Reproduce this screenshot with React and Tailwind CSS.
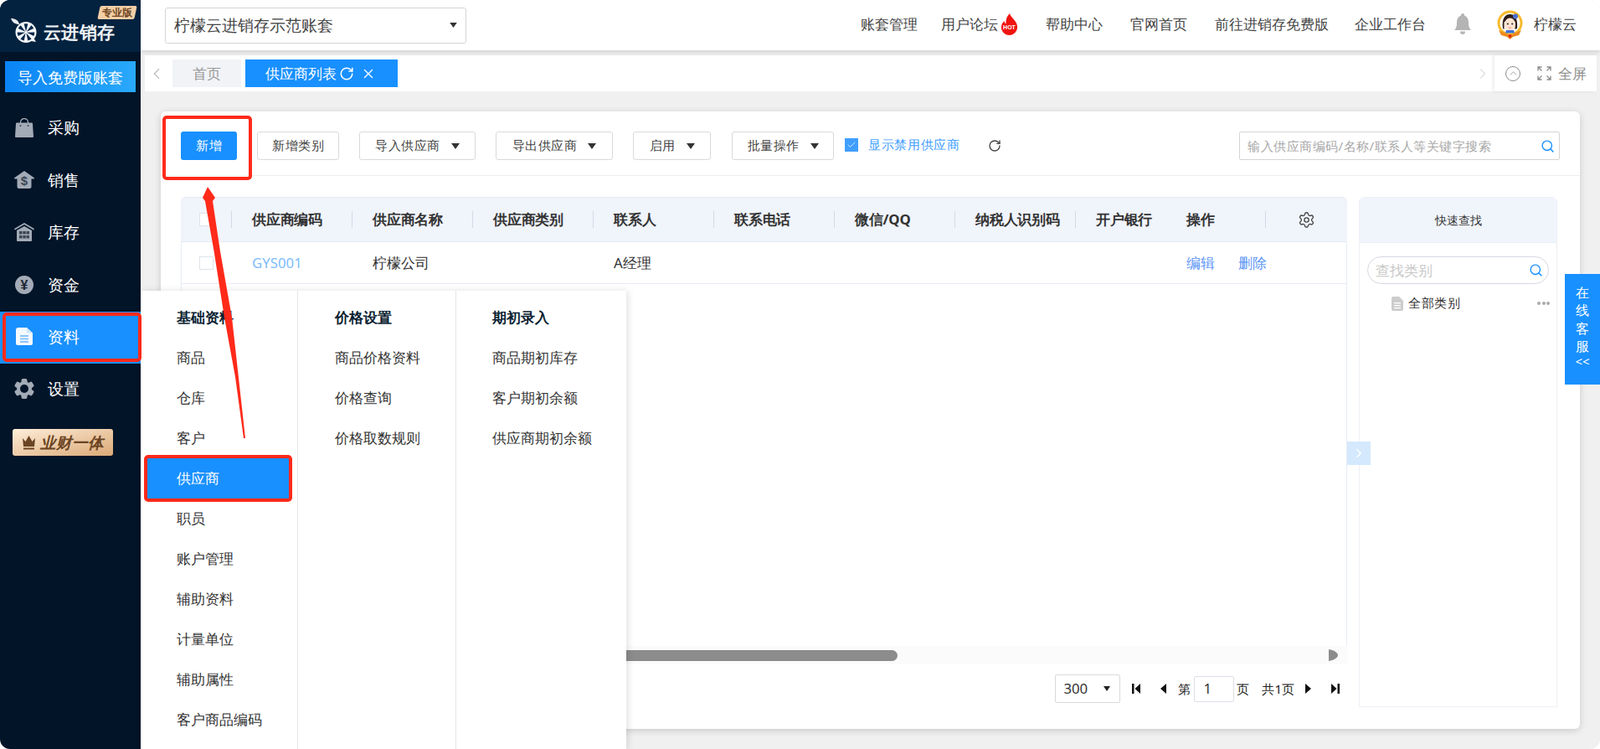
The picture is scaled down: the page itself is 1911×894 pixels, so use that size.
import React from 'react';
import { RotateCw, X, ChevronLeft, ChevronRight, ChevronUp, Search, Settings, Check } from 'lucide-react';

const Caret = ({ w = 10, h = 7 }) => (
  <svg width={w} height={h} viewBox="0 0 10 7" className="shrink-0"><path d="M0 0h10L5 7z" fill="#333" /></svg>
);

const wedge = 'M18 15.500l-2.400-9a9.500 9.500 0 0 1 4.800 0z';
const Logo = () => (
  <svg width="34" height="31" viewBox="0 0 34 31" className="shrink-0">
    <path d="M0 0c5 0 9 2 10 7-5 0-8-2-10-7z" fill="#e8edf2" />
    <circle cx="18" cy="16.500" r="12.500" fill="#f4f6f8" />
    <path d="M27 23l3 5-6-1z" fill="#f4f6f8" />
    <g fill="#06274a">
      {[0, 51, 103, 154, 206, 257, 309].map((a) => (
        <path key={a} d={wedge} transform={`rotate(${a} 18 16.500)`} />
      ))}
    </g>
  </svg>
);

const gray = '#a3abb6';
const dark = '#3c4654';
const icons = {
  bag: (
    <svg width="22" height="23" viewBox="0 0 22 23">
      <path d="M2 5.500h18a1 1 0 0 1 1 .9l1 15.600a1 1 0 0 1-1 1H1a1 1 0 0 1-1-1L1 6.400a1 1 0 0 1 1-.9z" fill={gray} />
      <path d="M6.500 9V5a4.500 4.500 0 0 1 9 0v4" fill="none" stroke={gray} strokeWidth="1.300" />
      <circle cx="6.500" cy="9" r="1" fill={dark} /><circle cx="15.500" cy="9" r="1" fill={dark} />
    </svg>
  ),
  money: (
    <svg width="24" height="21" viewBox="0 0 24 21">
      <path d="M12 0l11.500 8a.8.8 0 0 1-.5 1.500h-2.500V19a2 2 0 0 1-2 2H5.500a2 2 0 0 1-2-2V9.500H1A.8.8 0 0 1 .5 8z" fill={gray} />
      <text x="12" y="17" textAnchor="middle" fontSize="15" fontWeight="700" fill={dark} fontFamily="Liberation Sans">$</text>
    </svg>
  ),
  house: (
    <svg width="24" height="22" viewBox="0 0 24 22">
      <path d="M12 0l12 7-.8 1.400L12 2 .8 8.400 0 7z" fill={gray} />
      <path d="M3 9l9-5 9 5v12a1 1 0 0 1-1 1H4a1 1 0 0 1-1-1z" fill={gray} />
      <g fill={dark}>
        <rect x="6" y="10" width="3.500" height="3.500" /><rect x="10.300" y="10" width="3.500" height="3.500" /><rect x="14.500" y="10" width="3.500" height="3.500" />
        <rect x="6" y="15" width="3.500" height="3.500" /><rect x="10.300" y="15" width="3.500" height="3.500" /><rect x="14.500" y="15" width="3.500" height="3.500" />
      </g>
    </svg>
  ),
  yen: (
    <svg width="22" height="22" viewBox="0 0 22 22">
      <circle cx="11" cy="11" r="11" fill={gray} />
      <text x="11" y="17" textAnchor="middle" fontSize="16" fontWeight="700" fill="#1b2533" fontFamily="Liberation Sans">¥</text>
    </svg>
  ),
  doc: (
    <svg width="20" height="21" viewBox="0 0 20 21">
      <path d="M3 0h10l7 6.500V19a2 2 0 0 1-2 2H2a2 2 0 0 1-2-2V3a3 3 0 0 1 3-3z" fill="#f5faff" />
      <path d="M13 0l7 6.500h-7z" fill="#cfe6ff" />
      <g fill="#8cc4fb"><rect x="5" y="9" width="10" height="2" /><rect x="5" y="12.500" width="10" height="2" /><rect x="5" y="16" width="10" height="2" /></g>
    </svg>
  ),
  gear: (
    <svg width="24" height="24" viewBox="0 0 24 24">
      <circle cx="12" cy="12" r="9" fill={gray} />
      {[0, 60, 120, 180, 240, 300].map((a) => (
        <rect key={a} x="8.500" y="0" width="7" height="6" rx="2" fill={gray} transform={`rotate(${a} 12 12)`} />
      ))}
      <circle cx="12" cy="12" r="5" fill="#011428" />
    </svg>
  ),
};

const nav = [
  ['bag', '采购', 'pb-[6px]'],
  ['money', '销售', 'pb-[5px]'],
  ['house', '库存', 'pb-[5px]'],
  ['yen', '资金', 'pb-[3px]'],
  ['doc', '资料', 'pb-[3px] bg-[#1890ff]'],
  ['gear', '设置', 'pb-[2px]'],
];

function Sidebar() {
  return (
    <aside className="w-[168px] shrink-0 h-full bg-[#011428] flex flex-col">
      <div className="h-[62px] bg-[#03223f] relative flex items-start pl-[13px] pt-[22px]">
        <Logo />
        <span className="ml-[5px] mt-[3px] text-[21px] tracking-[0.3px] leading-[26px] font-bold text-[#f0f3f6] whitespace-nowrap">云进销存</span>
        <span className="absolute left-[118px] top-[7px] w-[44px] h-[16px] bg-[#f3cfa6] -skew-x-12 rounded-[2px] flex items-center justify-center">
          <span className="text-[12px] leading-none font-bold text-[#6e4520] skew-x-12 whitespace-nowrap">专业版</span>
        </span>
      </div>
      <button className="mt-[11px] mx-[6px] w-[156px] h-[37px] bg-gradient-to-r from-[#0a84f5] to-[#29a9fb] text-white text-[18px] leading-none flex items-center justify-center whitespace-nowrap">导入免费版账套</button>
      <nav className="mt-[14px] flex flex-col">
        {nav.map(([ic, label, cls]) => (
          <div key={label} className={`h-[62px] flex items-center ${cls}`}>
            <span className="w-[57px] shrink-0 flex items-center justify-center">{icons[ic]}</span>
            <span className="text-[19.200px] leading-none text-white">{label}</span>
          </div>
        ))}
      </nav>
      <div className="mt-[16px] ml-[15px] w-[120px] h-[32px] rounded-[3px] bg-gradient-to-br from-[#fdeeda] to-[#dba976] flex items-center pl-[12px] gap-[6px]">
        <svg width="15" height="17" viewBox="0 0 15 17" className="shrink-0"><path d="M0 3l3.500 4L7.500 0l4 7L15 3l-1 10H1z" fill="#6b4423" /><rect x="1" y="14.500" width="13" height="2" fill="#6b4423" /></svg>
        <span className="text-[18.500px] leading-none font-bold italic text-[#6b4423] whitespace-nowrap">业财一体</span>
      </div>
    </aside>
  );
}

function Avatar() {
  return (
    <svg width="33" height="35" viewBox="0 0 33 35" className="shrink-0">
      <circle cx="16.500" cy="15.500" r="13.500" fill="#fffdf6" stroke="#f7b92c" strokeWidth="3" />
      <path d="M8 22C6.500 11 10 5 16.500 5S26 11 25 22l-2.500 1V14c-3 0-7-1-9-3.500-1 2-2.500 3-4 4V23z" fill="#2e1d1a" />
      <ellipse cx="16.500" cy="17" rx="6.500" ry="7.500" fill="#fde3d3" />
      <circle cx="13.800" cy="16.500" r="1.100" fill="#332" /><circle cx="19.200" cy="16.500" r="1.100" fill="#332" />
      <path d="M15.200 21q1.300 .8 2.600 0" stroke="#d33" strokeWidth=".7" fill="none" />
      <circle cx="23" cy="7.500" r="3" fill="#4a6fd0" />
      <path d="M12 24h9l1 3.500H11z" fill="#3f70d6" />
      <path d="M3 24l13.500 6L30 24l-3 6-7 2-3.500 3-3.500-3-7-2z" fill="#ee8a1e" />
      <circle cx="16.500" cy="31" r="2" fill="#e02a14" />
    </svg>
  );
}

function TopBar() {
  return (
    <header className="h-[60px] shrink-0 bg-white shadow-[0_2px_6px_rgba(0,0,0,0.14)] relative z-10 flex items-center pl-[29px]">
      <div className="w-[360px] h-[43px] border border-[#d5d5d5] rounded-[3px] flex items-center justify-between pl-[10px] pr-[10px]">
        <span className="text-[19.200px] text-[#444] whitespace-nowrap">柠檬云进销存示范账套</span>
        <Caret w={9} h={6} />
      </div>
      <div className="ml-auto flex items-center text-[16.800px] text-[#444] pr-[28px] pb-[2px] whitespace-nowrap">
        <span>账套管理</span>
        <span className="ml-[28px]">用户论坛</span>
        <svg width="21" height="26" viewBox="0 0 21 26" className="ml-[3px]">
          <path d="M11 0c1 5 8 8 9 15 .8 6-4 11-9.500 11S0 21 1 15c.5-3 2.500-5 3.500-6 0 2 1 3 2 3.500C6 7 8 3 11 0z" fill="#f0140f" />
          <text x="10.500" y="19" textAnchor="middle" fontSize="7" fontWeight="700" fill="#fff" fontFamily="Liberation Sans">HOT</text>
        </svg>
        <span className="ml-[33px]">帮助中心</span>
        <span className="ml-[33px]">官网首页</span>
        <span className="ml-[33px]">前往进销存免费版</span>
        <span className="ml-[31px]">企业工作台</span>
        <svg width="22" height="26" viewBox="0 0 22 26" className="ml-[33px]">
          <path d="M11 0a2 2 0 0 1 2 2.500c4 1.500 5 5 5 9 0 4 1 6.500 3 8.500H1c2-2 3-4.500 3-8.500 0-4 1-7.500 5-9A2 2 0 0 1 11 0z" fill="#b4b4b4" />
          <path d="M8 21.500h6a3 3.500 0 0 1-6 0z" fill="#b4b4b4" />
        </svg>
        <span className="ml-[29px]"><Avatar /></span>
        <span className="ml-[12px]">柠檬云</span>
      </div>
    </header>
  );
}

function TabBar() {
  return (
    <div className="mt-[6px] ml-[5px] mr-[4px] h-[43px] shrink-0 bg-white flex items-center">
      <ChevronLeft size={22} strokeWidth={1.200} className="ml-[3px] text-[#bbb] shrink-0" />
      <div className="ml-[8px] w-[82px] h-[33px] bg-[#f1f3f7] text-[#999] text-[16.800px] flex items-center justify-center">首页</div>
      <div className="ml-[5px] w-[182px] h-[33px] bg-[#1890ff] text-white text-[16.800px] flex items-center pl-[24px]">
        <span className="whitespace-nowrap">供应商列表</span>
        <RotateCw size={18} strokeWidth={2} className="ml-[3px]" />
        <X size={18} strokeWidth={1.800} className="ml-[8px]" />
      </div>
      <ChevronRight size={20} strokeWidth={1} className="ml-auto mr-[4px] text-[#bbb] shrink-0" />
      <div className="w-[122px] h-full shadow-[-2px_0_4px_rgba(0,0,0,0.08)] flex items-center pl-[13px] text-[#8c8c8c]">
        <span className="w-[18px] h-[18px] rounded-full border border-[#8c8c8c] flex items-center justify-center"><ChevronUp size={13} strokeWidth={1.500} /></span>
        <svg width="17" height="17" viewBox="0 0 17 17" className="ml-[20px]" fill="none" stroke="#8c8c8c" strokeWidth="1.300">
          <path d="M1 5.500V1h4.500M16 5.500V1h-4.500M1 11.500V16h4.500M16 11.500V16h-4.500M1 1l4.500 4.500M16 1l-4.500 4.500M1 16l4.500-4.500M16 16l-4.500-4.500" />
        </svg>
        <span className="ml-[8px] text-[16.800px] whitespace-nowrap">全屏</span>
      </div>
    </div>
  );
}

const Btn = ({ w, ml, children, caret }) => (
  <button className={`${w} ${ml} h-[34px] border border-[#d9d9d9] rounded-[3px] bg-white text-[15.400px] tracking-[0.5px] text-[#444] flex items-center justify-center whitespace-nowrap shrink-0`}>
    <span>{children}</span>
    {caret && <span className="ml-[13px] flex"><Caret /></span>}
  </button>
);

function Toolbar() {
  return (
    <div className="h-[77px] shrink-0 border-b border-[#eeeeee] flex items-start pt-[24px] pl-[24px] pr-[24px]">
      <button className="w-[67px] h-[34px] rounded-[3px] bg-[#1890ff] text-white text-[15.400px] tracking-[0.5px] flex items-center justify-center shrink-0">新增</button>
      <Btn w="w-[98px]" ml="ml-[24px]">新增类别</Btn>
      <Btn w="w-[139px]" ml="ml-[24px]" caret>导入供应商</Btn>
      <Btn w="w-[140px]" ml="ml-[24px]" caret>导出供应商</Btn>
      <Btn w="w-[93px]" ml="ml-[24px]" caret>启用</Btn>
      <Btn w="w-[122px]" ml="ml-[25px]" caret>批量操作</Btn>
      <span className="ml-[13px] mt-[8px] w-[16px] h-[16px] bg-[#409eff] flex items-center justify-center shrink-0"><Check size={12} strokeWidth={1.500} className="text-white" /></span>
      <span className="ml-[12px] mt-[5px] text-[15.400px] tracking-[0.7px] leading-[22px] text-[#409eff] whitespace-nowrap">显示禁用供应商</span>
      <RotateCw size={16} strokeWidth={2} className="ml-[33px] mt-[9px] text-[#444] shrink-0" />
      <div className="ml-auto w-[383px] h-[34px] border border-[#d4d4d4] rounded-[2px] flex items-center justify-between pl-[9px] pr-[5px]">
        <span className="text-[15px] tracking-[0.5px] text-[#a8a8a8] whitespace-nowrap">输入供应商编码/名称/联系人等关键字搜索</span>
        <Search size={17} strokeWidth={2} className="text-[#1890ff]" />
      </div>
    </div>
  );
}

const cols = ['供应商编码', '供应商名称', '供应商类别', '联系人', '联系电话', '微信/QQ', '纳税人识别码'];

function PageIcon({ kind }) {
  const p = {
    first: 'M0 0h2.500v12H0zM10 0v12L3.500 6z',
    prev: 'M7 0v12L0 6z',
    next: 'M0 0v12l7-6z',
    last: 'M7.500 0h2.500v12H7.500zM0 0v12l6.500-6z',
  }[kind];
  const small = kind === 'prev' || kind === 'next';
  return <svg width={small ? 7 : 10} height="12" viewBox={small ? '0 0 7 12' : '0 0 10 12'} className="shrink-0"><path d={p} fill="#111" /></svg>;
}

function Table() {
  return (
    <div className="w-[1393px] shrink-0 flex flex-col h-[609px]">
      <div className="h-[536px] border-x border-[#e8ecf4] rounded-t-[6px] flex flex-col">
        <div className="h-[54px] shrink-0 bg-[#f0f4fb] border-t border-b border-[#e6eaf2] rounded-t-[6px] flex items-center text-[16.800px] tracking-[-0.2px] font-bold text-[#333] -mx-px">
          <div className="w-[60px] shrink-0 pl-[22px]"><span className="block w-[17px] h-[16px] bg-white border border-[#dfe3ea]" /></div>
          {cols.map((c) => (
            <div key={c} className="w-[144px] shrink-0 flex items-center">
              <span className="w-px h-[20px] bg-[#d3dae6]" />
              <span className="ml-[24px] whitespace-nowrap">{c}</span>
            </div>
          ))}
          <div className="w-[108px] shrink-0 flex items-center">
            <span className="w-px h-[20px] bg-[#d3dae6]" />
            <span className="ml-[24px] whitespace-nowrap">开户银行</span>
          </div>
          <div className="w-[119px] shrink-0 flex items-center pl-[25px]">操作</div>
          <div className="flex-1 flex items-center">
            <span className="w-px h-[20px] bg-[#d3dae6]" />
            <Settings size={21} strokeWidth={1.500} className="ml-[38px] text-[#444]" />
          </div>
        </div>
        <div className="h-[50px] shrink-0 border-b border-[#eaeaf4] flex items-center text-[16.800px] text-[#333] -mx-px">
          <div className="w-[60px] shrink-0 pl-[22px]"><span className="block w-[17px] h-[16px] bg-white border border-[#dfe3ea]" /></div>
          <div className="w-[144px] shrink-0 pl-[25px] text-[#7cbcfb]">GYS001</div>
          <div className="w-[144px] shrink-0 pl-[25px]">柠檬公司</div>
          <div className="w-[144px] shrink-0" />
          <div className="w-[144px] shrink-0 pl-[25px]">A经理</div>
          <div className="w-[432px] shrink-0" />
          <div className="w-[108px] shrink-0" />
          <div className="shrink-0 pl-[25px] text-[#5c95f5] flex gap-[28px]"><span>编辑</span><span>删除</span></div>
        </div>
      </div>
      <div className="h-[22px] shrink-0 bg-[#fbfbfb] flex items-center relative">
        <div className="w-[856px] h-[13px] bg-[#8c8c8c] rounded-r-full" />
        <svg width="11" height="14" viewBox="0 0 11 14" className="absolute right-[11px] top-[4px]"><path d="M0 0c6 1 11 4 11 7s-5 6-11 7z" fill="#8c8c8c" /></svg>
      </div>
      <div className="mt-[12px] h-[34px] shrink-0 flex items-center justify-end pr-[9px] text-[#222]">
        <div className="w-[78px] h-[34px] border border-[#d9d9d9] rounded-[2px] flex items-center justify-between pl-[9px] pr-[11px] text-[16.800px] text-[#333]">
          <span>300</span>
          <svg width="8" height="6" viewBox="0 0 8 6"><path d="M0 0h8L4 6z" fill="#222" /></svg>
        </div>
        <span className="ml-[14px] flex"><PageIcon kind="first" /></span>
        <span className="ml-[24px] flex"><PageIcon kind="prev" /></span>
        <span className="ml-[14px] text-[15px] whitespace-nowrap">第</span>
        <div className="ml-[4px] w-[48px] h-[31px] border border-[#dedee8] rounded-[2px] flex items-center pl-[10px] text-[16.800px] text-[#333]">1</div>
        <span className="ml-[3px] text-[15px] whitespace-nowrap">页</span>
        <span className="ml-[15px] text-[15px] whitespace-nowrap">共1页</span>
        <span className="ml-[13px] flex"><PageIcon kind="next" /></span>
        <span className="ml-[24px] flex"><PageIcon kind="last" /></span>
      </div>
    </div>
  );
}

function QuickPanel() {
  return (
    <div className="ml-[14px] w-[237px] h-[609px] shrink-0 border border-[#eeeff6] rounded-t-[6px] flex flex-col">
      <div className="h-[54px] shrink-0 bg-[#f0f4fb] rounded-t-[6px] border-b border-[#e8ecf4] flex items-center justify-center text-[14.400px] text-[#333]">快速查找</div>
      <div className="mt-[16px] mx-[9px] h-[33px] rounded-full border border-[#d4d8e0] flex items-center justify-between pl-[9px] pr-[6px]">
        <span className="text-[16.800px] text-[#c8c8c8] whitespace-nowrap">查找类别</span>
        <Search size={17} strokeWidth={2} className="text-[#1890ff]" />
      </div>
      <div className="mt-[11px] h-[24px] flex items-center pl-[38px] pr-[8px]">
        <svg width="14" height="17" viewBox="0 0 14 17"><path d="M2 0h7l5 5v10a2 2 0 0 1-2 2H2a2 2 0 0 1-2-2V2a2 2 0 0 1 2-2z" fill="#ccc" /><g fill="#fff"><rect x="3" y="7" width="8" height="1.300" /><rect x="3" y="10" width="8" height="1.300" /><rect x="3" y="13" width="8" height="1.300" /></g></svg>
        <span className="ml-[6px] text-[15.400px] tracking-[0.5px] text-[#333] whitespace-nowrap">全部类别</span>
        <span className="ml-auto flex gap-[1.500px]"><i className="w-[4px] h-[4px] rounded-full bg-[#aaa]" /><i className="w-[4px] h-[4px] rounded-full bg-[#aaa]" /><i className="w-[4px] h-[4px] rounded-full bg-[#aaa]" /></span>
      </div>
    </div>
  );
}

const menu = [
  ['基础资料', ['商品', '仓库', '客户', '供应商', '职员', '账户管理', '辅助资料', '计量单位', '辅助属性', '客户商品编码']],
  ['价格设置', ['商品价格资料', '价格查询', '价格取数规则']],
  ['期初录入', ['商品期初库存', '客户期初余额', '供应商期初余额']],
];
const widths = ['w-[188px] border-r border-[#e6e6e6]', 'w-[189px] border-r border-[#e6e6e6]', 'w-[203px]'];
const pads = ['pl-[43px]', 'pl-[44px]', 'pl-[43px]'];

function Flyout() {
  return (
    <div className="absolute left-[168px] top-[347px] bottom-0 w-[580px] bg-white shadow-[2px_0_8px_rgba(0,0,0,0.12)] flex z-20 text-[16.800px] text-[#333]">
      {menu.map(([head, items], i) => (
        <div key={head} className={`${widths[i]} shrink-0 pt-[8px]`}>
          <div className={`h-[48px] flex items-center font-bold text-[#0b1f33] ${pads[i]}`}>{head}</div>
          {items.map((it) =>
            it === '供应商' && i === 0 ? (
              <div key={it} className="relative h-[48px] ml-[7px] mr-[10px] bg-[#1890ff] text-white flex items-center pl-[36px]">
                {it}
                <span className="absolute -left-[3px] -right-[4px] -top-[4px] -bottom-[4px] border-[4px] border-[#ff2a1a] rounded-[5px]" />
              </div>
            ) : (
              <div key={it} className={`h-[48px] flex items-center whitespace-nowrap ${pads[i]}`}>{it}</div>
            )
          )}
        </div>
      ))}
    </div>
  );
}

export default function App() {
  return (
    <div className="relative w-[1911px] h-[894px] overflow-hidden rounded-[12px] flex bg-[#f0f0f0] font-['Liberation_Sans','Noto_Sans_CJK_SC',sans-serif]">
      <Sidebar />
      <main className="flex-1 min-w-0 flex flex-col">
        <TopBar />
        <TabBar />
        <section className="mt-[24px] ml-[24px] mr-[24px] h-[737px] bg-white rounded-[6px] shadow-[0_2px_8px_rgba(0,0,0,0.16)] flex flex-col">
          <Toolbar />
          <div className="mt-[25px] flex pl-[24px]">
            <Table />
            <QuickPanel />
          </div>
        </section>
      </main>

      <Flyout />

      {/* collapse handle */}
      <div className="absolute left-[1609px] top-[527px] w-[28px] h-[28px] bg-[#d4e9fd] flex items-center justify-center"><ChevronRight size={18} className="text-white" /></div>

      {/* online service */}
      <div className="absolute left-[1869px] top-[327px] w-[42px] h-[132px] bg-[#1890ff] text-white flex flex-col items-center pt-[12px] text-[16px] leading-[21.300px]">
        <span>在</span><span>线</span><span>客</span><span>服</span>
        <span className="text-[15px] leading-[14px]">&lt;&lt;</span>
      </div>

      {/* annotations */}
      <span className="absolute left-[194px] top-[138px] w-[107px] h-[77px] border-[4px] border-[#ff2a1a] rounded-[5px] z-30" />
      <span className="absolute left-[3px] top-[373px] w-[166px] h-[59px] border-[4px] border-[#ff2a1a] rounded-[5px] z-30" />
      <svg className="absolute left-0 top-0 z-30 pointer-events-none" width="400" height="600" viewBox="0 0 400 600">
        <polygon points="248,223 257,236 254,240 263,300 277,379 293,523 291,523 281,450 268,379 255.600,300 245,240 242,236" fill="#ff2a1a" />
      </svg>
    </div>
  );
}
